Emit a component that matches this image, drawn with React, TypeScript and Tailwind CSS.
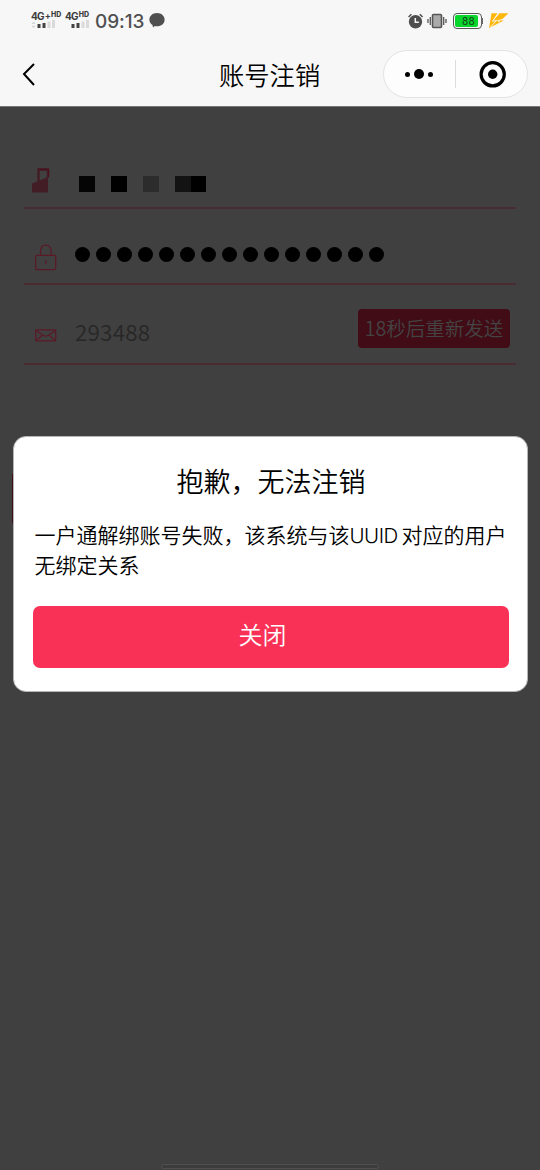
const passwordDots = Array.from({ length: 15 }, (_, i) => i);

function SignalIcon({ label, plus, first }: { label: string; plus?: boolean; first?: boolean }) {
  return (
    <div className={first ? 'w-[34px]' : 'w-[29px]'}>
      <div className="flex h-[10px] items-start whitespace-nowrap font-['Inter'] font-bold leading-[11px] text-[#3c3c3c]">
        <span className="text-[10px] tracking-[-0.8px]">{label}</span>
        {plus && <span className="-mt-px ml-px text-[9px] tracking-[-0.8px]">+</span>}
        <span className="-mt-[2px] ml-px text-[7px] font-extrabold">HD</span>
      </div>
      <svg width="26" height="9" viewBox="0 0 26 9" className="-mt-px block">
        {first && <path d="M.5 4 2.500 1.600l2 2.400zM.5 5.800l2 2.400 2-2.400z" fill="#d5d5d5" />}
        <path d="M6.500 4h3v4h-3zM11.500 3h3v5h-3z" fill="#444" />
        <path d="M16.500 1.500h3V8h-3zM21 0h3v8h-3z" fill="#dadada" />
      </svg>
    </div>
  );
}

function StatusBar() {
  return (
    <div className="flex h-[42px] items-start justify-between pl-[31px] pr-[30px]">
      <div className="flex items-start pt-[11px]">
        <SignalIcon label="4G" plus first />
        <SignalIcon label="4G" />
        <span className="ml-px mt-px w-[54px] whitespace-nowrap font-['Inter'] text-[19px] font-[450] leading-5 tracking-[-0.1px] text-[#505050]">09:13</span>
        <svg width="16" height="16" viewBox="0 0 16 16" className="mt-[2px]" fill="#505050">
          <path d="M8 0c4.400 0 7.600 2.900 7.600 6.700S12.400 13.300 8 13.300c-.8 0-1.400-.1-2.200-.3L4 14.600l-.5-2.500C1.500 10.900.4 9 .4 6.700.4 2.900 3.600 0 8 0z" />
        </svg>
      </div>
      <div className="flex items-start pt-[13px]">
        <svg width="16" height="16" viewBox="0 0 16 16" className="mr-[3px] -translate-x-px">
          <circle cx="7.500" cy="8.700" r="6.700" fill="#4d4d4d" />
          <path d="M.6 4 3.400 1.200M14.600 4l-2.800-2.800" stroke="#4d4d4d" strokeWidth="1.500" />
          <path d="M7.300 5v4.300h3.500" fill="none" stroke="#f7f7f7" strokeWidth="1.500" />
        </svg>
        <svg width="20" height="16" viewBox="0 0 20 16" className="mr-[5px] -translate-x-px">
          <rect x="5.500" y="1.500" width="9" height="13" rx="1" fill="#aaa" stroke="#555" strokeWidth="1.600" />
          <path d="M3.300 4v8M1 6v4M16.700 4v8M19 6v4" stroke="#555" strokeWidth="1.300" />
        </svg>
        <div className="relative h-[16px] w-[29px] rounded-[4px] border border-[#555] p-[1px]">
          <div className="h-full w-[23px] rounded-[2px] bg-[#08d62b] pl-[7px] font-['Roboto'] text-[11px] font-normal leading-[13px] tracking-[0.200px] text-[#173d1c]">88</div>
          <span className="absolute -right-[2px] top-[4px] h-[6px] w-[2px] bg-[#666]" />
        </div>
        <svg width="22" height="16" viewBox="0 0 22 16" className="ml-[6px]" fill="#ffb70b">
          <path d="M3.500.3h6L5 7.800 11.500.3h9L13 7.300l2.500.4L1 15z" />
          <path d="M10.500 0 4.500 8.300l4-.8L2.500 14M14.500 6.600l-5 1 2.500 1.600" fill="none" stroke="#f7f7f7" strokeWidth=".9" />
        </svg>
      </div>
    </div>
  );
}

function NavBar() {
  return (
    <div className="flex h-[64px] items-start pl-[22px] pr-3">
      <svg width="14" height="24" viewBox="0 0 14 24" className="mt-5" fill="none" stroke="#000" strokeWidth="2">
        <path d="M12 2 2 12l10 11" />
      </svg>
      <h1 className="ml-[183px] mt-[13px] w-[164px] whitespace-nowrap text-[25.300px] leading-[38px] text-black">账号注销</h1>
      <div className="mt-2 flex h-12 w-[145px] items-center rounded-full border border-[#e3e3e3] bg-[#fdfdfd]">
        <div className="flex h-[28px] w-[72px] items-center justify-center gap-[4px] border-r border-[#ddd] pr-[1px]">
          <span className="h-[5px] w-[5px] rounded-full bg-black" />
          <span className="h-[10px] w-[10px] rounded-full bg-black" />
          <span className="h-[5px] w-[5px] rounded-full bg-black" />
        </div>
        <svg width="28" height="28" viewBox="0 0 28 28" className="ml-[23px]">
          <circle cx="13.700" cy="14.300" r="11.600" fill="none" stroke="#000" strokeWidth="3.200" />
          <circle cx="13.700" cy="14.300" r="4.700" />
        </svg>
      </div>
    </div>
  );
}

function AccountForm() {
  return (
    <div className="px-6 pt-[30px]">
      <div className="flex h-[72px] items-start border-b-2 border-[#492b31] pl-2 pt-[31px]">
        <svg width="18" height="25" viewBox="0 0 18 25">
          <path d="M0 15.500 16 9v15.500H0z" fill="#431d25" />
          <path d="M6.500 13V1.800H16V10" fill="none" stroke="#431d25" strokeWidth="2.500" />
          <path d="M6 1h10.500v7" fill="none" stroke="#4d0d1c" />
        </svg>
        <div className="ml-[29px] mt-[8px] flex h-4">
          <span className="mr-4 w-4 bg-[#050505]" />
          <span className="mr-4 w-4 bg-black" />
          <span className="mr-4 w-4 bg-[#2c2c2c]" />
          <span className="w-4 bg-[#131313]" />
          <span className="w-[15px] bg-black" />
        </div>
      </div>
      <div className="flex h-[76px] items-start border-b-2 border-[#492b31] pl-[11px] pt-[35px]">
        <svg width="22" height="27" viewBox="0 0 22 27" fill="none" stroke="#5b1927" strokeWidth="1.200">
          <rect x=".7" y="11.300" width="20" height="14.400" rx="1.200" />
          <path d="M5.500 11V6.500a5.300 5.300 0 0 1 10.600 0V11M10.800 16v4.500" />
        </svg>
        <div className="ml-[18px] mt-[3px] flex gap-[6px]">
          {passwordDots.map((dot) => (
            <span key={dot} className="h-[15px] w-[15px] rounded-full bg-black" />
          ))}
        </div>
      </div>
      <div className="flex h-[80px] items-start border-b-2 border-[#492b31] pl-[11px] pr-1.5">
        <svg width="22" height="13" viewBox="0 0 22 13" className="mt-[44px]" fill="none" stroke="#5b1927" strokeWidth="1.200">
          <rect x=".7" y=".9" width="20" height="11" rx=".5" />
          <path d="m1 1.500 7.500 5q2.300 1.300 4.500 0l7.500-5M1 11.500 7.700 6M20.500 11.500 13.700 6" />
        </svg>
        <span className="ml-[18px] mt-[30px] flex-1 text-[22.500px] leading-[32px] tracking-[0.200px] text-[#272727]">293488</span>
        <button className="mt-[24px] h-[39px] w-[152px] whitespace-nowrap rounded-[4px] bg-[#410c16] pb-[2px] text-[19.500px] leading-[34px] text-[#444]">
          18秒后重新发送
        </button>
      </div>
    </div>
  );
}

function ErrorDialog() {
  return (
    <div className="absolute left-[13px] top-[329px] h-[256px] w-[515px] rounded-[13px] border border-[#b5b5b5] bg-white px-[19px] text-black">
      <h2 className="mt-[25px] whitespace-nowrap pl-[1px] text-center text-[27px] leading-[38px]">抱歉，无法注销</h2>
      <p className="mt-[19px] whitespace-nowrap pl-[1.500px] text-[21px] leading-[30px]">
        一户通解绑账号失败，该系统与该<span className="inline-block w-[52px] font-['Inter'] text-[20.500px] font-light leading-none tracking-[-0.500px]">UUID</span>对应的用户
        <br />
        无绑定关系
      </p>
      <button className="mt-[27px] block h-[62px] w-[476px] rounded-[7px] bg-[#f93156] pb-[7px] pr-[17px] text-[24px] leading-[54px] text-white">
        关闭
      </button>
    </div>
  );
}

export default function App() {
  return (
    <div className="h-[1170px] w-[540px] overflow-hidden bg-[#f7f7f7] font-['Noto_Sans_CJK_SC',sans-serif] font-[350]">
      <StatusBar />
      <NavBar />
      <main className="relative flex h-[1064px] flex-col border-t border-[#777] bg-[#404040]">
        <AccountForm />
        {/* submit button, mostly hidden by the dialog */}
        <div className="ml-3 mt-[107px] h-[53px] w-[514px] rounded-[4px] bg-[#410c16]" />
        <ErrorDialog />
        <div className="mx-auto mt-auto h-[5px] w-[218px] rounded-full border border-[#505050] bg-[#3c3c3c]" />
        <div className="h-px" />
      </main>
    </div>
  );
}
